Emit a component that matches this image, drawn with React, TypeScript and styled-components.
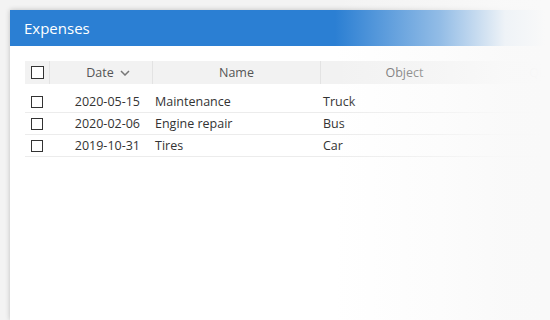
import React from "react";
import styled, { createGlobalStyle } from "styled-components";

const Global = createGlobalStyle`
  html, body { margin: 0; padding: 0; }
  body {
    background: #f3f3f3;
    font-family: "Open Sans", "Noto Sans", sans-serif;
    width: 550px;
    height: 320px;
    overflow: hidden;
  }
`;

const Page = styled.div`
  padding: 10px 0 0 10px;
  height: 310px;
  position: relative;
`;

const Panel = styled.div`
  width: 540px;
  height: 310px;
  background: #fff;
  box-shadow: 0 0 5px rgba(0, 0, 0, 0.22);
  display: flex;
  flex-direction: column;
  overflow: hidden;
`;

const Header = styled.div`
  height: 36px;
  flex: none;
  background: #2b7fd3;
  color: #fff;
  font-size: 15px;
  display: flex;
  align-items: center;
  padding-left: 14px;
`;

const Body = styled.div`
  padding: 15px 0 0 15px;
`;

const Grid = styled.div`
  display: grid;
  grid-template-columns: 24px 103px 168px 168px 100px;
  width: 563px;
`;

const HeadCell = styled.div<{ $sep?: boolean; $shift?: number }>`
  height: 23px;
  background: #f2f2f2;
  display: flex;
  align-items: center;
  justify-content: center;
  font-size: 12.5px;
  color: #555;
  border-left: ${(p) => (p.$sep ? "1px solid #e3e3e3" : "none")};
  box-sizing: border-box;
  gap: 6px;
  padding-left: ${(p) => p.$shift ?? 0}px;
`;

const Spacer = styled.div`
  grid-column: 1 / -1;
  height: 7px;
`;

const Cell = styled.div<{ $align?: "left" | "right" | "center" }>`
  height: 22px;
  border-bottom: 1px solid #ececec;
  box-sizing: border-box;
  display: flex;
  align-items: center;
  justify-content: ${(p) =>
    p.$align === "right" ? "flex-end" : p.$align === "center" ? "center" : "flex-start"};
  padding: ${(p) => (p.$align === "right" ? "0 12px 0 0" : p.$align === "left" ? "0 0 0 3px" : "0")};
  font-size: 12.5px;
  color: #333;
  white-space: nowrap;
`;

const Box = styled.span<{ $size?: number }>`
  display: inline-block;
  width: ${(p) => p.$size ?? 12}px;
  height: ${(p) => p.$size ?? 12}px;
  border: 1px solid #333;
  background: #fff;
  box-sizing: border-box;
`;

const Fade = styled.div`
  position: absolute;
  inset: 0;
  pointer-events: none;
  background: linear-gradient(
    to right,
    rgba(249, 249, 249, 0) 335px,
    rgba(249, 249, 249, 0.5) 440px,
    rgba(249, 249, 249, 0.95) 505px,
    rgba(249, 249, 249, 1) 545px
  );
`;

const Chevron = () => (
  <svg width="10" height="6" viewBox="0 0 10 6">
    <path d="M1 1 L5 5 L9 1" fill="none" stroke="#777" strokeWidth="1.5" />
  </svg>
);

const rows = [
  ["2020-05-15", "Maintenance", "Truck"],
  ["2020-02-06", "Engine repair", "Bus"],
  ["2019-10-31", "Tires", "Car"],
];

export default function App() {
  return (
    <>
      <Global />
      <Page>
        <Panel>
          <Header>Expenses</Header>
          <Body>
            <Grid>
              <HeadCell>
                <Box $size={13} />
              </HeadCell>
              <HeadCell $sep $shift={14}>
                Date <Chevron />
              </HeadCell>
              <HeadCell $sep>Name</HeadCell>
              <HeadCell $sep>Object</HeadCell>
              <HeadCell>Qu</HeadCell>
              <Spacer />
              {rows.map((r) => (
                <React.Fragment key={r[0]}>
                  <Cell $align="center">
                    <Box />
                  </Cell>
                  <Cell $align="right">{r[0]}</Cell>
                  <Cell $align="left">{r[1]}</Cell>
                  <Cell $align="left">{r[2]}</Cell>
                  <Cell />
                </React.Fragment>
              ))}
            </Grid>
          </Body>
        </Panel>
        <Fade />
      </Page>
    </>
  );
}
